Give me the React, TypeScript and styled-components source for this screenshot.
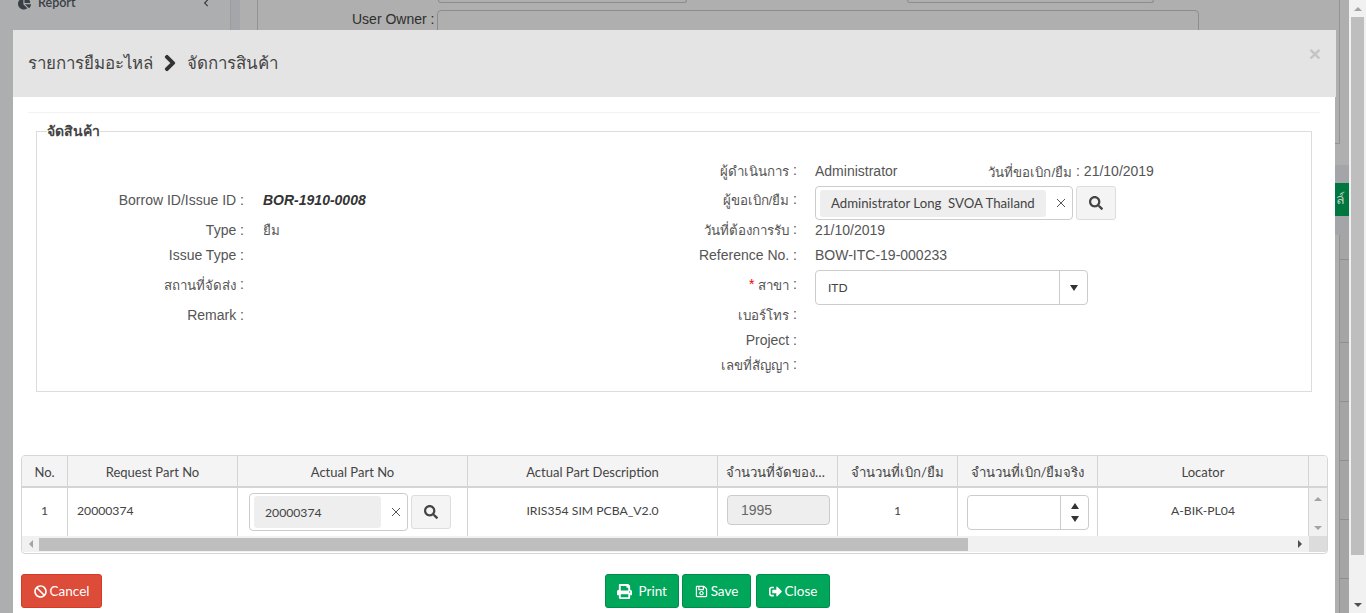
import React from "react";
import styled, { createGlobalStyle } from "styled-components";
import { FaBan, FaChevronRight, FaPrint, FaRegSave, FaSearch, FaSignOutAlt, FaChartPie, FaChevronLeft } from "react-icons/fa";

const Global = createGlobalStyle`
  html, body { margin: 0; padding: 0; height: 613px; overflow: hidden; background: #adaeaf; }
  * { box-sizing: border-box; }
`;
const sans = `"Liberation Sans", Arial, sans-serif`;
const soft = `Lato, "Noto Sans", sans-serif`;

const Screen = styled.div`
  position: relative; width: 1366px; height: 613px; display: flex; overflow: hidden; font-family: ${sans};
`;
const Backdrop = styled.div`
  width: 1349px; height: 613px; display: flex; background: #afafaf; color: #333;
`;
const Sidebar = styled.aside`
  width: 231px; flex: none; background: #adaeb0; border-right: 1px solid #9b9c9e; height: 100%;
`;
const SideItem = styled.div`
  height: 14px; margin: -4px 0 0; padding: 0 20px 0 18px; display: flex; align-items: center; gap: 7px;
  font: 600 12.5px/14px ${soft}; color: #3a3f46;
  span { flex: 1; }
`;
const Strip = styled.div`
  width: 9px; flex: none; background: #a4a6a9;
`;
const Main = styled.main`
  flex: 1; padding-left: 17px; display: flex; flex-direction: column;
`;
const OwnerPanel = styled.div`
  height: 144px; width: 1083px; border: 1px solid #939393; border-top: 0; flex: none;
`;
const TopInputs = styled.div`
  display: flex; height: 10px;
`;
const TopInput = styled.div<{ $left: number; $width: number }>`
  margin-left: ${p => p.$left}px; width: ${p => p.$width}px; height: 3px; border: 1px solid #8d8d8d; border-top: 0; border-radius: 0 0 4px 4px;
`;
const OwnerRow = styled.div`
  display: flex; align-items: flex-start; gap: 3px; padding-left: 94px; font-size: 14px; color: #2e2e2e; line-height: 18px;
`;
const OwnerBox = styled.div`
  width: 762px; height: 34px; border: 1px solid #8d8d8d; border-radius: 4px;
`;
const Band = styled.div`
  margin-top: 21px; margin-left: -17px; height: 70px; background: #a3a5a8; display: flex; justify-content: flex-end; padding-top: 18px; flex: none;
`;
const GreenBtn = styled.div`
  width: 120px; height: 33px; background: #00773f; color: #b9cfc2; font-size: 14px; line-height: 33px; text-align: right; padding-right: 4px;
`;
const BackTable = styled.div`
  flex: 1; margin-left: 1082px; border-left: 1px solid #939393; background: #a5a5a5;
  background-image: repeating-linear-gradient(to bottom, transparent 0, transparent 58px, #8f8f8f 58px, #8f8f8f 59px);
  background-position: 0 49px;
`;

const PageScroll = styled.div`
  width: 17px; background: #f1f1f1; display: flex; flex-direction: column; align-items: center; flex: none; height: 613px;
`;
const ArrowUp = styled.div<{ $c?: string; $s?: number; $h?: number }>`
  width: 0; height: 0; flex: none;
  border-left: ${p => p.$s ?? 4}px solid transparent; border-right: ${p => p.$s ?? 4}px solid transparent;
  border-bottom: ${p => p.$h ?? 4}px solid ${p => p.$c ?? "#a3a3a3"};
`;
const ArrowDown = styled.div<{ $c?: string; $s?: number; $h?: number }>`
  width: 0; height: 0; flex: none;
  border-left: ${p => p.$s ?? 4}px solid transparent; border-right: ${p => p.$s ?? 4}px solid transparent;
  border-top: ${p => p.$h ?? 4}px solid ${p => p.$c ?? "#505050"};
`;
const ArrowLeft = styled.div`
  width: 0; height: 0; flex: none; border-top: 4px solid transparent; border-bottom: 4px solid transparent; border-right: 4px solid #a3a3a3;
`;
const ArrowRight = styled.div`
  width: 0; height: 0; flex: none; border-top: 4px solid transparent; border-bottom: 4px solid transparent; border-left: 4px solid #505050;
`;
const PageThumb = styled.div`
  width: 13px; height: 538px; background: #bebebe; margin: 4px 0 0; flex: none;
`;
const PageTop = styled.div`
  height: 13px; display: flex; align-items: flex-end; flex: none; padding-bottom: 2px;
`;
const PageBottom = styled.div`
  flex: 1; display: flex; align-items: flex-end; padding-bottom: 6px;
`;

const Modal = styled.section`
  position: absolute; left: 13px; top: 30px; width: 1322px; height: 583px; background: #fff;
`;
const ModalHeader = styled.header`
  width: 1323px; height: 67px; background: #e4e4e4; display: flex; align-items: center; padding: 0 0 2px 15px; gap: 8px;
  color: #444; font: 400 16.9px ${sans}; position: relative;
  svg { font-size: 18px; color: #333; margin: 0; stroke: #333; stroke-width: 30px; }
`;
const CloseX = styled.span`
  position: absolute; right: 15px; top: 13px; font: 700 21px/21px ${sans}; color: #c4c4c4;
`;
const Rule = styled.div`
  height: 1px; background: #f3f3f3; margin: 15px 15px 0 15px;
`;
const Fieldset = styled.fieldset`
  margin: 10px 23px 0 23px; padding: 0; border: 1px solid #dcdcdc; height: 269px; min-width: 0;
  position: relative;
`;
const Legend = styled.legend`
  margin-left: 10px; padding: 0; font: 700 14px/16px ${sans}; color: #444;
`;
const Th = styled.span`
  font-size: 13.3px; vertical-align: -1px;
`;
const FormGrid = styled.div`
  display: grid; padding-top: 20px;
  grid-template-columns: 207px 356px 197px 1fr;
  grid-template-rows: 24px 34px 25px 25px 35px 25px 25px 25px;
  align-items: center; font: 14px/20px ${sans}; color: #555;
`;
const Label = styled.div`
  text-align: right; white-space: nowrap;
  b { color: #e00; font-weight: 400; }
`;
const Value = styled.div<{ $strong?: boolean }>`
  padding-left: ${p => (p.$strong ? 19 : 18)}px; white-space: nowrap;
  font-weight: ${p => (p.$strong ? 700 : 400)}; font-style: ${p => (p.$strong ? "italic" : "normal")};
  color: ${p => (p.$strong ? "#333" : "#555")}; font-size: 14px;
`;
const Left = styled(Value)`padding-left: 19px;`;
const ValueSplit = styled(Value)`
  display: flex; gap: 91px; padding-top: 1px;
`;
const ControlCell = styled.div<{ $top: number }>`
  padding-left: 18px; display: flex; gap: 3px; align-self: start; margin-top: ${p => p.$top}px; height: 0;
`;
const TagBox = styled.div<{ $w: number; $h: number; $size: number }>`
  flex: none; width: ${p => p.$w}px; height: ${p => p.$h}px; border: 1px solid #ccc; border-radius: 4px; background: #fff;
  display: flex; align-items: center; padding: 0 5px 0 4px; justify-content: space-between;
  font: ${p => p.$size}px ${soft}; color: #444;
`;
const Tag = styled.div<{ $w: number; $h: number }>`
  width: ${p => p.$w}px; height: ${p => p.$h}px; background: #eee; border-radius: 3px; padding-left: 11px;
  display: flex; align-items: center; white-space: nowrap;
`;
const ClearIcon = styled.svg`
  width: 10px; height: 10px; stroke: #555; stroke-width: 1; fill: none; flex: none; margin-right: 1px;
`;
const SearchBtn = styled.button<{ $top?: number }>`
  flex: none; width: 40px; height: 34px; margin-top: ${p => p.$top ?? 0}px; border: 1px solid #ddd; border-radius: 3px; background: #f4f4f4; color: #444;
  display: flex; align-items: center; justify-content: center; padding: 0; font-size: 14px;
`;
const SelectBox = styled.div`
  flex: none; width: 273px; height: 35px; border: 1px solid #ccc; border-radius: 4px; display: flex; align-items: center;
  font: 12px ${soft}; color: #444; padding-left: 12px;
  span { flex: 1; }
`;
const SelectArrow = styled.div`
  width: 28px; height: 100%; border-left: 1px solid #ccc; display: flex; align-items: center; justify-content: center;
`;

const Table = styled.div`
  margin: 63px 7px 0 8px; width: 1307px; height: 99px; border: 1px solid #d6d6d6; border-radius: 4px; overflow: hidden;
  font: 12.2px ${soft}; color: #444;
`;
const cols = "46px 170px 230px 250px 120px 120px 140px 211px 1fr";
const HeadRow = styled.div`
  display: grid; grid-template-columns: ${cols}; height: 32px; background: #f4f4f4; border-bottom: 2px solid #d4d4d4;
`;
const HeadCell = styled.div`
  border-right: 1px solid #d4d4d4; display: flex; align-items: center; justify-content: center; white-space: nowrap; overflow: hidden; padding: 2px 8px 0;
  font-size: 13px;
  span { overflow: hidden; text-overflow: ellipsis; font-size: 13.2px; }
`;
const BodyRow = styled.div`
  display: grid; grid-template-columns: ${cols}; height: 49px;
`;
const Cell = styled.div<{ $left?: boolean }>`
  border-right: 1px solid #d4d4d4; display: flex; align-items: center; justify-content: ${p => (p.$left ? "flex-start" : "center")};
  padding: 0 0 5px ${p => (p.$left ? 9 : 0)}px; white-space: nowrap;
`;
const PartCell = styled.div`
  border-right: 1px solid #d4d4d4; display: flex; align-items: flex-start; gap: 3px; padding: 5px 0 0 11px;
`;
const QtyCell = styled.div`
  border-right: 1px solid #d4d4d4; padding: 7px 0 0 9px;
`;
const QtyInput = styled.div`
  width: 103px; height: 30px; background: #eee; border: 1px solid #ccc; border-radius: 4px; padding-left: 13px; color: #666; font: 14px/28px ${sans};
`;
const SpinCell = styled.div`
  border-right: 1px solid #d4d4d4; padding: 7px 0 0 9px;
`;
const Spin = styled.div`
  width: 122px; height: 35px; border: 1px solid #ccc; border-radius: 4px; display: flex; justify-content: flex-end;
`;
const SpinBtns = styled.div`
  width: 28px; border-left: 1px solid #ccc; display: flex; flex-direction: column; align-items: center; justify-content: center; gap: 7px;
`;
const VScroll = styled.div`
  background: #f1f1f1; display: flex; flex-direction: column; justify-content: space-between; align-items: center; padding: 9px 0 6px; height: 48px;
`;
const HScroll = styled.div`
  height: 16px; background: #f1f1f1; display: flex; align-items: center; position: relative; margin-top: -1px;
`;
const HThumb = styled.div`
  width: 929px; height: 13px; background: #bebebe; margin-left: 17px; flex: none;
`;
const HLeft = styled.div`
  position: absolute; left: 7px; top: 4px;
`;
const HRight = styled.div`
  position: absolute; right: 25px; top: 4px;
`;
const Corner = styled.div`
  position: absolute; right: 0; top: 0; width: 18px; height: 100%; background: #dcdcdc;
`;

const Footer = styled.footer`
  display: flex; margin: 20px 0 0 8px; gap: 3px;
`;
const Btn = styled.button<{ $w: number; $bg: string; $bd: string; $ml?: number }>`
  width: ${p => p.$w}px; height: 34px; background: ${p => p.$bg}; border: 1px solid ${p => p.$bd}; border-radius: 3px;
  margin-left: ${p => p.$ml ?? 0}px; color: #fff; font: 13.5px ${soft};
  display: flex; align-items: center; justify-content: center; gap: 3px; padding: 0;
  svg { font-size: 13px; }
`;

const X = () => (
  <ClearIcon viewBox="0 0 10 10"><path d="M1 1L9 9M9 1L1 9" /></ClearIcon>
);

export default function App() {
  return (
    <Screen>
      <Global />
      <Backdrop>
        <Sidebar>
          <SideItem><FaChartPie size={13} /><span>Report</span><FaChevronLeft size={8} /></SideItem>
        </Sidebar>
        <Strip />
        <Main>
          <OwnerPanel>
            <TopInputs>
              <TopInput $left={180} $width={249} />
              <TopInput $left={220} $width={247} />
            </TopInputs>
            <OwnerRow>User Owner :<OwnerBox /></OwnerRow>
          </OwnerPanel>
          <Band><GreenBtn>ล์</GreenBtn></Band>
          <BackTable />
        </Main>
      </Backdrop>
      <PageScroll>
        <PageTop><ArrowUp /></PageTop>
        <PageThumb />
        <PageBottom><ArrowDown /></PageBottom>
      </PageScroll>

      <Modal>
        <ModalHeader>
          รายการยืมอะไหล่ <FaChevronRight /> จัดการสินค้า
          <CloseX>×</CloseX>
        </ModalHeader>
        <Rule />
        <Fieldset>
          <Legend>จัดสินค้า</Legend>
          <FormGrid>
            <Label /><Left />
            <Label><Th>ผู้ดำเนินการ</Th> :</Label>
            <ValueSplit><span>Administrator</span><span><Th>วันที่ขอเบิก/ยืม</Th> : 21/10/2019</span></ValueSplit>

            <Label>Borrow ID/Issue ID :</Label><Left $strong>BOR-1910-0008</Left>
            <Label><Th>ผู้ขอเบิก/ยืม</Th> :</Label>
            <ControlCell $top={3}>
              <TagBox $w={258} $h={34} $size={13.2}>
                <Tag $w={226} $h={27}>Administrator Long&nbsp; SVOA Thailand</Tag><X />
              </TagBox>
              <SearchBtn><FaSearch /></SearchBtn>
            </ControlCell>

            <Label>Type :</Label><Left><Th>ยืม</Th></Left>
            <Label><Th>วันที่ต้องการรับ</Th> :</Label><Value>21/10/2019</Value>

            <Label>Issue Type :</Label><Left />
            <Label>Reference No. :</Label><Value>BOW-ITC-19-000233</Value>

            <Label><Th>สถานที่จัดส่ง</Th> :</Label><Left />
            <Label><b>*</b> <Th>สาขา</Th> :</Label>
            <ControlCell $top={3}>
              <SelectBox><span>ITD</span><SelectArrow><ArrowDown $c="#333" $h={6} /></SelectArrow></SelectBox>
            </ControlCell>

            <Label>Remark :</Label><Left />
            <Label><Th>เบอร์โทร</Th> :</Label><Value />

            <Label /><Left />
            <Label>Project :</Label><Value />

            <Label /><Left />
            <Label><Th>เลขที่สัญญา</Th> :</Label><Value />
          </FormGrid>
        </Fieldset>

        <Table>
          <HeadRow>
            <HeadCell>No.</HeadCell>
            <HeadCell>Request Part No</HeadCell>
            <HeadCell>Actual Part No</HeadCell>
            <HeadCell>Actual Part Description</HeadCell>
            <HeadCell><span>จำนวนที่จัดของได้</span></HeadCell>
            <HeadCell><span>จำนวนที่เบิก/ยืม</span></HeadCell>
            <HeadCell><span>จำนวนที่เบิก/ยืมจริง</span></HeadCell>
            <HeadCell>Locator</HeadCell>
            <div />
          </HeadRow>
          <BodyRow>
            <Cell>1</Cell>
            <Cell $left>20000374</Cell>
            <PartCell>
              <TagBox $w={159} $h={38} $size={12.2}>
                <Tag $w={127} $h={32}>20000374</Tag><X />
              </TagBox>
              <SearchBtn $top={2}><FaSearch /></SearchBtn>
            </PartCell>
            <Cell>IRIS354 SIM PCBA_V2.0</Cell>
            <QtyCell><QtyInput>1995</QtyInput></QtyCell>
            <Cell>1</Cell>
            <SpinCell>
              <Spin><SpinBtns><ArrowUp $c="#333" $h={6} /><ArrowDown $c="#333" $h={6} /></SpinBtns></Spin>
            </SpinCell>
            <Cell>A-BIK-PL04</Cell>
            <VScroll><ArrowUp /><ArrowDown $c="#a3a3a3" /></VScroll>
          </BodyRow>
          <HScroll>
            <HLeft><ArrowLeft /></HLeft>
            <HThumb />
            <HRight><ArrowRight /></HRight>
            <Corner />
          </HScroll>
        </Table>

        <Footer>
          <Btn $w={81} $bg="#dd4b39" $bd="#d73925"><FaBan />Cancel</Btn>
          <Btn $w={74} $bg="#00a65a" $bd="#008d4c" $ml={500}><FaPrint size={15} />&nbsp;Print</Btn>
          <Btn $w={69} $bg="#00a65a" $bd="#008d4c"><FaRegSave />Save</Btn>
          <Btn $w={74} $bg="#00a65a" $bd="#008d4c" $ml={2}><FaSignOutAlt />Close</Btn>
        </Footer>
      </Modal>
    </Screen>
  );
}
